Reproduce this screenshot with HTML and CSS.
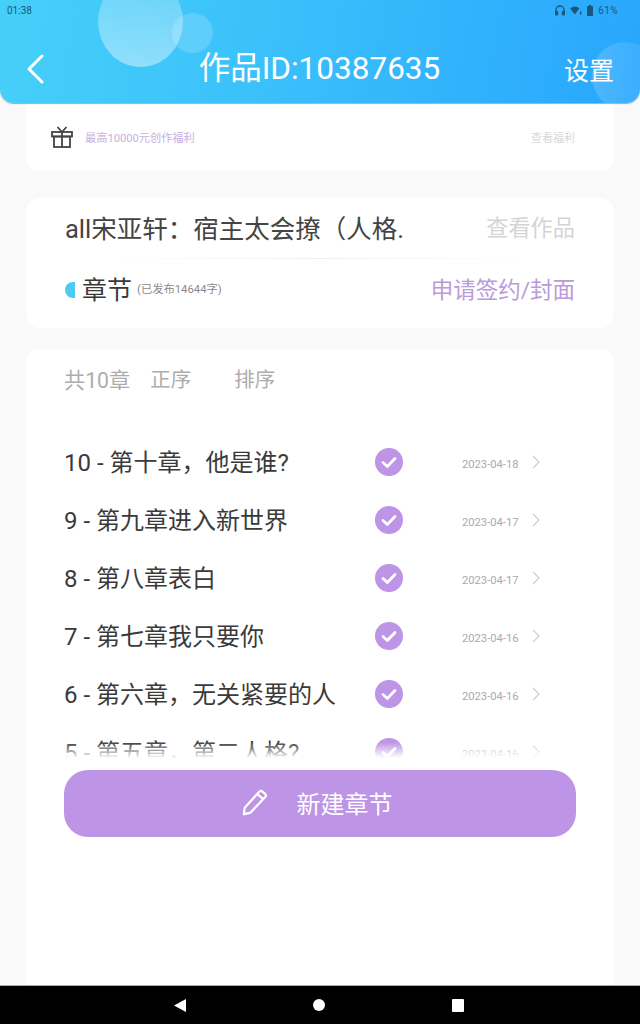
FILE: index.html
```html
<!DOCTYPE html>
<html lang="zh-CN">
<head>
<meta charset="utf-8">
<title>作品</title>
<link rel="stylesheet" href="styles.css">
</head>
<body>
<div class="app">
  <header class="header">
    <span class="bubble bubble-a"></span>
    <span class="bubble bubble-b"></span>
    <span class="bubble bubble-c"></span>
    <div class="status">
      <span>01:38</span>
      <span class="status-icons">
        <svg width="10" height="11" viewBox="0 0 10 11"><path d="M1 7V5a4 4 0 0 1 8 0v2" fill="none" stroke="#1c567c" stroke-width="1.400"/><rect x="0" y="6" width="3.200" height="4.500" rx="1.200" fill="#1c567c"/><rect x="6.800" y="6" width="3.200" height="4.500" rx="1.200" fill="#1c567c"/></svg>
        <svg class="wifi" width="12" height="9" viewBox="0 0 12 9"><path d="M0 2.200Q4.700 -1 9.500 2.200L4.800 8.500Z" fill="#1c567c"/><rect x="10" y="5.500" width="1.500" height="3" fill="#1c567c"/></svg>
        <svg width="6" height="11" viewBox="0 0 6 11"><path d="M1.700 0h2.600v1.300H6V11H0V1.300h1.700z" fill="#1c567c"/></svg>
        <span>61%</span>
      </span>
    </div>
    <div class="topbar">
      <svg class="back" width="20" height="32" viewBox="0 0 20 32"><path d="M17 3L4 16l13 13" fill="none" stroke="#fff" stroke-width="3" stroke-linecap="round" stroke-linejoin="round"/></svg>
      <h1 class="title">作品ID:10387635</h1>
      <span class="settings">设置</span>
    </div>
  </header>

  <main class="main">
    <section class="card welfare">
      <svg class="gift" width="22" height="24" viewBox="0 0 22 24"><g fill="none" stroke="#444" stroke-width="1.800"><rect x="1" y="7" width="20" height="4.500"/><rect x="3" y="11.500" width="16" height="10.500"/><path d="M11 7v15M11 7L6.500 2M11 7l4.500-5"/></g></svg>
      <span class="welfare-text">最高10000元创作福利</span>
      <span class="welfare-link">查看福利</span>
    </section>

    <section class="card work">
      <div class="work-row">
        <span class="work-name">all宋亚轩：宿主太会撩（人格.</span>
        <span class="work-link">查看作品</span>
      </div>
      <div class="rule"></div>
      <div class="chapter-row">
        <span class="marker"></span>
        <span class="chapter-label">章节</span>
        <span class="chapter-count">(已发布14644字)</span>
        <span class="apply">申请签约/封面</span>
      </div>
    </section>

    <section class="card chapters">
      <div class="sort-row">
        <span class="total">共10章</span>
        <span class="asc">正序</span>
        <span class="sort">排序</span>
      </div>
      <div class="list">
        <div class="item"><span class="item-name">10 - 第十章，他是谁?</span><svg class="check" viewBox="0 0 28 28"><circle cx="14" cy="14" r="14" fill="#bd94e6"/><path d="M8 14.500l4.300 4L20 10.500" fill="none" stroke="#fff" stroke-width="2.800" stroke-linecap="round" stroke-linejoin="round"/></svg><span class="date">2023-04-18</span><svg class="arrow" width="8" height="14" viewBox="0 0 8 14"><path d="M1 1l6 6-6 6" fill="none" stroke="#ccc" stroke-width="1.200"/></svg></div>
        <div class="item"><span class="item-name">9 - 第九章进入新世界</span><svg class="check" viewBox="0 0 28 28"><circle cx="14" cy="14" r="14" fill="#bd94e6"/><path d="M8 14.500l4.300 4L20 10.500" fill="none" stroke="#fff" stroke-width="2.800" stroke-linecap="round" stroke-linejoin="round"/></svg><span class="date">2023-04-17</span><svg class="arrow" width="8" height="14" viewBox="0 0 8 14"><path d="M1 1l6 6-6 6" fill="none" stroke="#ccc" stroke-width="1.200"/></svg></div>
        <div class="item"><span class="item-name">8 - 第八章表白</span><svg class="check" viewBox="0 0 28 28"><circle cx="14" cy="14" r="14" fill="#bd94e6"/><path d="M8 14.500l4.300 4L20 10.500" fill="none" stroke="#fff" stroke-width="2.800" stroke-linecap="round" stroke-linejoin="round"/></svg><span class="date">2023-04-17</span><svg class="arrow" width="8" height="14" viewBox="0 0 8 14"><path d="M1 1l6 6-6 6" fill="none" stroke="#ccc" stroke-width="1.200"/></svg></div>
        <div class="item"><span class="item-name">7 - 第七章我只要你</span><svg class="check" viewBox="0 0 28 28"><circle cx="14" cy="14" r="14" fill="#bd94e6"/><path d="M8 14.500l4.300 4L20 10.500" fill="none" stroke="#fff" stroke-width="2.800" stroke-linecap="round" stroke-linejoin="round"/></svg><span class="date">2023-04-16</span><svg class="arrow" width="8" height="14" viewBox="0 0 8 14"><path d="M1 1l6 6-6 6" fill="none" stroke="#ccc" stroke-width="1.200"/></svg></div>
        <div class="item"><span class="item-name">6 - 第六章，无关紧要的人</span><svg class="check" viewBox="0 0 28 28"><circle cx="14" cy="14" r="14" fill="#bd94e6"/><path d="M8 14.500l4.300 4L20 10.500" fill="none" stroke="#fff" stroke-width="2.800" stroke-linecap="round" stroke-linejoin="round"/></svg><span class="date">2023-04-16</span><svg class="arrow" width="8" height="14" viewBox="0 0 8 14"><path d="M1 1l6 6-6 6" fill="none" stroke="#ccc" stroke-width="1.200"/></svg></div>
        <div class="item"><span class="item-name">5 - 第五章，第二人格?</span><svg class="check" viewBox="0 0 28 28"><circle cx="14" cy="14" r="14" fill="#bd94e6"/><path d="M8 14.500l4.300 4L20 10.500" fill="none" stroke="#fff" stroke-width="2.800" stroke-linecap="round" stroke-linejoin="round"/></svg><span class="date">2023-04-16</span><svg class="arrow" width="8" height="14" viewBox="0 0 8 14"><path d="M1 1l6 6-6 6" fill="none" stroke="#ccc" stroke-width="1.200"/></svg></div>
        <div class="fade"></div>
      </div>
      <button class="new-btn">
        <svg width="28" height="27" viewBox="0 0 30 28"><g fill="none" stroke="#fff" stroke-width="2.400" stroke-linejoin="round"><path d="M3 26.500l1-7L19.500 2.500a2.500 2.500 0 0 1 3.500-.2l2.700 2.300a2.500 2.500 0 0 1 .2 3.500L10 25z"/><path d="M3 26.500L10 25M17.500 5l6.500 5.500"/></g></svg>
        <span>新建章节</span>
      </button>
    </section>
  </main>

  <nav class="nav">
    <svg width="12" height="13" viewBox="0 0 12 13"><path d="M12 0v13L0 6.500z" fill="#fff"/></svg>
    <span class="nav-home"></span>
    <span class="nav-square"></span>
  </nav>
</div>
</body>
</html>
```

FILE: styles.css
```css
* { box-sizing: border-box; }
html, body { margin: 0; padding: 0; }
body {
  width: 640px;
  height: 1024px;
  overflow: hidden;
  background: #f9f9f9;
  font-family: Roboto, "Noto Sans CJK SC", sans-serif;
  color: #333;
}
.app { height: 1024px; display: flex; flex-direction: column; }

.header {
  position: relative;
  height: 103px;
  flex: none;
  overflow: hidden;
  border-radius: 0 0 14px 14px;
  background: linear-gradient(100deg, #46d0f8 0%, #3abffb 45%, #28a6fd 100%);
  color: #fff;
  box-shadow: 0 1px 1px rgba(30, 100, 170, .5);
  z-index: 2;
}
.bubble { position: absolute; border-radius: 50%; }
.bubble-a { left: 98px; top: -24px; width: 85px; height: 91px; background: linear-gradient(180deg, rgba(255,255,255,.2), rgba(255,255,255,.42)); }
.bubble-b { left: 172px; top: 13px; width: 41px; height: 40px; background: rgba(255,255,255,.17); }
.bubble-c { left: 592px; top: 42px; width: 66px; height: 68px; background: linear-gradient(90deg, rgba(255,255,255,.17), rgba(255,255,255,.05)); }

.status {
  position: relative;
  height: 22px;
  padding: 0 22px 2px 7px;
  display: flex;
  justify-content: space-between;
  align-items: center;
  font-size: 10px;
  color: #1c567c;
}
.status-icons { display: flex; align-items: center; gap: 5px; letter-spacing: .4px; }

.topbar {
  position: relative;
  height: 81px;
  padding: 13px 26px 0 25px;
  display: grid;
  grid-template-columns: 1fr auto 1fr;
  align-items: center;
}
.title { margin: 0; font-size: 31.500px; font-weight: 400; line-height: 1; }
.settings { font-size: 25px; justify-self: end; }

.main {
  flex: 1;
  min-height: 0;
  padding: 0 26px;
  display: flex;
  flex-direction: column;
}
.card { background: #fff; border-radius: 14px; }

.welfare {
  height: 68px;
  flex: none;
  margin-bottom: 27px;
  padding: 0 39px 0 25px;
  display: flex;
  align-items: center;
  border-radius: 0 0 14px 14px;
}
.welfare-text { margin-left: 12px; font-size: 11.200px; color: #c9b0de; }
.welfare-link { margin-left: auto; font-size: 11px; color: #d8d8d8; }

.work { height: 130px; flex: none; margin-bottom: 21px; padding: 0 39px; }
.work-row { height: 60px; padding-bottom: 4px; display: flex; align-items: center; justify-content: space-between; }
.work-name { font-size: 25.500px; color: #444; white-space: nowrap; }
.work-link { font-size: 22.200px; color: #d4d4d4; }
.rule { height: 1px; margin: 0 40px; background: linear-gradient(90deg, transparent, #f0f0f0 50%, transparent); }
.chapter-row { height: 61px; padding-bottom: 3px; display: flex; align-items: center; }
.marker { width: 10px; height: 16px; border-radius: 8px 0 0 8px; background: #4acbf2; margin-right: 7px; margin-top: 3px; }
.chapter-label { font-size: 25px; color: #3a3a3a; }
.chapter-count { margin-left: 5px; font-size: 11.300px; color: #8a8a8a; }
.apply { margin-left: auto; font-size: 22.500px; color: #bb9ad8; }

.chapters { flex: 1; min-height: 0; padding: 0 38px; border-radius: 14px 14px 0 0; }
.sort-row { height: 62px; padding-bottom: 4px; display: flex; align-items: center; font-size: 20.500px; color: #adadad; }
.total { font-size: 21.200px; }
.asc { margin-left: 20px; }
.sort { margin-left: 43px; }

.list {
  position: relative;
  height: 327px;
  margin-top: 22px;
  overflow: hidden;
}
.item { height: 58px; display: flex; align-items: center; }
.item-name { width: 311px; flex: none; padding-bottom: 4px; font-size: 24px; color: #3a3a3a; white-space: nowrap; }
.check { width: 28px; height: 28px; flex: none; }
.date { margin-left: 59px; margin-top: 4px; font-size: 11.200px; color: #aaa; }
.arrow { margin-left: 14px; margin-top: -1px; }
.fade {
  position: absolute;
  left: 0;
  right: 0;
  bottom: 0;
  height: 18px;
  background: linear-gradient(180deg, rgba(255,255,255,0), #fff 90%);
}

.new-btn {
  width: 512px;
  height: 67px;
  margin-top: 10px;
  padding: 0 7px 2px 0;
  border: 0;
  border-radius: 24px;
  background: #bd94e6;
  color: #fff;
  font: inherit;
  font-size: 24px;
  display: flex;
  align-items: center;
  justify-content: center;
  gap: 28px;
}

.nav {
  height: 39px;
  flex: none;
  background: #000;
  border-top: 1px solid #aaa;
  display: flex;
  align-items: center;
  justify-content: center;
  gap: 127px;
  padding-right: 2px;
}
.nav-home { width: 12px; height: 12px; border-radius: 50%; background: #fff; }
.nav-square { width: 12px; height: 13px; background: #fff; border-radius: 1px; }
```
